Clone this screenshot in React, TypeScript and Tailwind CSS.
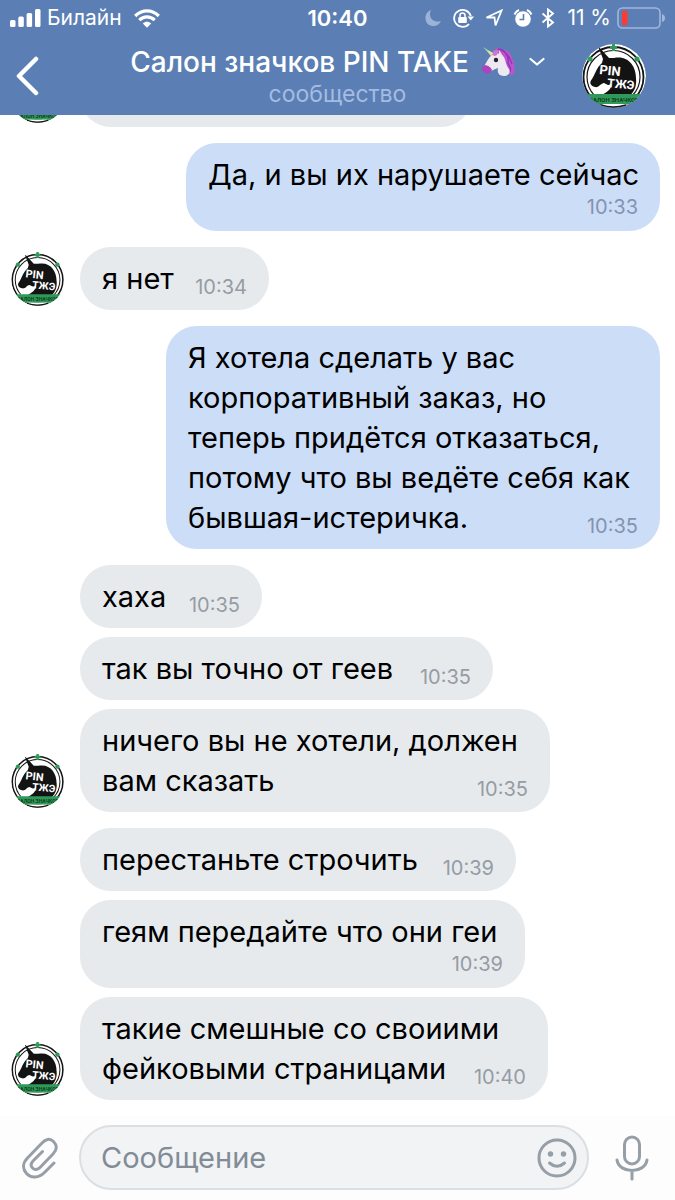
import { useState } from 'react';
import clsx from 'clsx';

interface Message {
  id: number;
  lines: string[];
  time: string;
  width: string;
  stacked?: boolean;
}

interface MessageGroup {
  id: number;
  own?: boolean;
  avatar?: boolean;
  messages: Message[];
}

const groups: MessageGroup[] = [
  {
    id: 1,
    avatar: true,
    messages: [{ id: 1, lines: [], time: '', width: 'w-[392px]' }],
  },
  {
    id: 2,
    own: true,
    messages: [{ id: 2, lines: ['Да, и вы их нарушаете сейчас'], time: '10:33', width: 'w-[474px]', stacked: true }],
  },
  {
    id: 3,
    avatar: true,
    messages: [{ id: 3, lines: ['я нет'], time: '10:34', width: 'w-[189px]' }],
  },
  {
    id: 4,
    own: true,
    messages: [
      {
        id: 4,
        lines: [
          'Я хотела сделать у вас',
          'корпоративный заказ, но',
          'теперь придётся отказаться,',
          'потому что вы ведёте себя как',
          'бывшая-истеричка.',
        ],
        time: '10:35',
        width: 'w-[494px]',
      },
    ],
  },
  {
    id: 5,
    avatar: true,
    messages: [
      { id: 5, lines: ['хаха'], time: '10:35', width: 'w-[182px]' },
      { id: 6, lines: ['так вы точно от геев'], time: '10:35', width: 'w-[413px]' },
      { id: 7, lines: ['ничего вы не хотели, должен', 'вам сказать'], time: '10:35', width: 'w-[470px]' },
    ],
  },
  {
    id: 6,
    avatar: true,
    messages: [
      { id: 8, lines: ['перестаньте строчить'], time: '10:39', width: 'w-[436px]' },
      { id: 9, lines: ['геям передайте что они геи'], time: '10:39', width: 'w-[445px]', stacked: true },
      { id: 10, lines: ['такие смешные со своиими', 'фейковыми страницами'], time: '10:40', width: 'w-[468px]' },
    ],
  },
];

function Avatar({ className }: { className: string }) {
  return (
    <svg viewBox="0 0 64 64" className={clsx('shrink-0 rounded-full', className)} role="img" aria-label="PIN TAKE">
      <circle cx="32" cy="32" r="32" fill="#fff" />
      <circle cx="31.5" cy="33" r="30" fill="none" stroke="#151515" strokeWidth="1.8" />
      <circle cx="31.5" cy="33" r="26.5" fill="none" stroke="#151515" strokeWidth="1.2" />
      <path
        d="M16 2 L27 14 L32 14 C46 11 54 22 54 34 C55 42 52 49 47 52 L18 52 C18 47 24 46 28 42 L22 39 C19 39 17 44 13 43 C8 42 7 38 10 35 C13 31 14 24 20 19 L21 15 Z"
        fill="#131313"
      />
      <path d="M11 51 C16 41 23 43 29 40 C30 45 25 48 20 51 Z" fill="#fff" />
      <g fill="#fff" fontFamily="Roboto, sans-serif" fontWeight="700">
        <text x="17" y="30" fontSize="13" transform="rotate(6 17 30)">PIN</text>
        <text x="25" y="43" fontSize="12" transform="rotate(5 25 43)">ТЖЭ</text>
      </g>
      <g fill="#2f9a58">
        <path d="M30 0h3v2h2v3h-2v2h-3v-2h-2v-3h2z" />
        <circle cx="8" cy="15" r="2.6" />
        <circle cx="55" cy="15" r="2.6" />
        <path d="M4 50 H60 L54 60 H10 Z" />
      </g>
      <path d="M18 60 H46 Q32 67 18 60" fill="#fff" />
      <path d="M19 61 Q31 65 44 61" fill="none" stroke="#151515" strokeWidth="1.5" />
      <text x="32" y="58" textAnchor="middle" fontSize="6" fontWeight="700" fontFamily="Roboto, sans-serif" fill="#123d22">
        САЛОН ЗНАЧКОВ
      </text>
    </svg>
  );
}

function Unicorn() {
  return (
    <svg viewBox="0 0 36 32" className="h-8 w-9 shrink-0" role="img" aria-label="Единорог">
      <path d="M13 7 C15 1 19 1 21 4 C27 3 31 8 31 13 C35 17 32 21 34 25 C34 29 30 30 27 27 C25 22 23 19 21 16 L12 9Z" fill="#bb55cf" />
      <path d="M17 3 C24 4 28 10 27 16 C27 20 31 21 29 26 M22 5 C29 9 29 14 31 18" fill="none" stroke="#8f34b5" strokeWidth="1.3" />
      <path d="M11 9 C14 6 19 7 22 10 C25 13 24 18 28 23 C30 27 27 30 23 30 C18 30 16 27 17 22 C13 23 11 25 8 26 C4 27 2 24 3 21 C5 17 7 12 11 9Z" fill="#eee8f0" />
      <path d="M2 20 C5 18 10 21 11 24 C9 28 5 29 3 26 C1 24 0 22 2 20Z" fill="#ae43bd" />
      <path d="M18 9 L18 4 L22 10Z" fill="#f4dce9" />
      <path d="M11 8 C12 4 15 3 18 5 C16 7 17 10 13 10Z" fill="#cf74cf" />
      <path d="M2 1 L12 7 L10 10Z" fill="#8fd8a4" />
      <path d="M6 4 L12 7 L10 10Z" fill="#f1dda0" />
      <circle cx="15" cy="14" r="2.2" fill="#28202a" />
    </svg>
  );
}

function StatusBar() {
  return (
    <div className="grid h-9 grid-cols-[1fr_auto_1fr] items-center px-[10px] text-[21px] leading-6">
      <div className="flex items-center">
        <svg viewBox="0 0 31 18" className="h-[18px] w-[31px]" fill="currentColor" aria-hidden="true">
          <rect x="0" y="11" width="5.5" height="7" rx="1.5" />
          <rect x="8.3" y="7.5" width="5.5" height="10.5" rx="1.5" />
          <rect x="16.6" y="4" width="5.5" height="14" rx="1.5" />
          <rect x="25" y="0" width="5.5" height="18" rx="1.5" />
        </svg>
        <span className="ml-[6px]">Билайн</span>
        <svg viewBox="0 0 26 19" className="ml-3 h-[19px] w-[26px]" fill="none" stroke="currentColor" strokeWidth="3.2" aria-hidden="true">
          <path d="M1.2 7 C8 .2 18 .2 24.8 7" />
          <path d="M5.3 11.2 C9.8 6.8 16.2 6.8 20.7 11.2" />
          <path d="M13 18.8 L8.8 14.6 C11.2 12.2 14.8 12.2 17.2 14.6Z" fill="currentColor" stroke="none" />
        </svg>
      </div>
      <span className="text-[22px] font-semibold">10:40</span>
      <div className="flex items-center justify-end">
        <svg viewBox="0 0 16 18" className="h-[18px] w-4" fill="#9db3d6" aria-hidden="true">
          <path d="M6 1 C-2 4-1 16 7 17 C11 17.5 14.5 15.5 16 12 C8 14.5 2.5 8 6 1Z" />
        </svg>
        <svg viewBox="0 0 22 20" className="ml-3 h-5 w-[22px]" fill="none" stroke="currentColor" aria-hidden="true">
          <path d="M16 16 A8.5 8.5 0 1 1 17.8 8" strokeWidth="1.8" />
          <path d="M14.5 8.5 H21 L17.8 12.5Z" fill="currentColor" stroke="none" />
          <rect x="5.2" y="9" width="8.6" height="6" rx="1" fill="currentColor" stroke="none" />
          <path d="M7 9.5 V7.5 A2.5 2.5 0 0 1 12 7.5 V9.5" strokeWidth="1.5" />
        </svg>
        <svg viewBox="0 0 18 18" className="ml-[10px] h-[18px] w-[18px]" fill="none" stroke="currentColor" strokeWidth="1.8" aria-hidden="true">
          <path d="M1.5 8.5 L16.5 1.5 L10.5 16.5 L9.5 8.5Z" />
        </svg>
        <svg viewBox="0 0 20 20" className="ml-[10px] h-5 w-5" aria-hidden="true">
          <circle cx="10" cy="11" r="7.8" fill="currentColor" />
          <path d="M1.5 6.5 A9 9 0 0 1 6 2 M14 2 A9 9 0 0 1 18.5 6.5" fill="none" stroke="currentColor" strokeWidth="2" />
          <path d="M10.5 6 V11.5 H6.5" fill="none" stroke="#5b7fb4" strokeWidth="1.6" />
        </svg>
        <svg viewBox="0 0 14 20" className="ml-2 h-5 w-[14px]" fill="none" stroke="currentColor" strokeWidth="1.9" aria-hidden="true">
          <path d="M1.5 5.5 L12 14.5 L7 18.5 V1.5 L12 5.5 L1.5 14.5" />
        </svg>
        <span className="ml-3 whitespace-nowrap">11 %</span>
        <svg viewBox="0 0 48 22" className="ml-[6px] h-[22px] w-12" aria-hidden="true">
          <rect x="1" y="1" width="42" height="20" rx="4.5" fill="none" stroke="#a2b7d9" strokeWidth="1.6" />
          <rect x="5" y="4" width="5.5" height="14" rx="1" fill="#ff3b30" />
          <path d="M45 7 Q48 8 48 11 T45 15Z" fill="#a2b7d9" />
        </svg>
      </div>
    </div>
  );
}

function Header() {
  return (
    <header className="shrink-0 bg-[#5b7fb4] text-white">
      <StatusBar />
      <div className="grid h-[79px] grid-cols-[1fr_auto_1fr] items-center px-4">
        <button type="button" aria-label="Назад" className="w-6">
          <svg viewBox="0 0 24 40" className="h-10 w-6" fill="none" stroke="currentColor" strokeWidth="4.5" strokeLinecap="round" strokeLinejoin="round">
            <path d="M20 3 L3 20 L20 37" />
          </svg>
        </button>
        <div className="text-center">
          <button type="button" className="flex h-9 items-center whitespace-nowrap">
            <h1 className="text-[28px] leading-9 font-medium">Салон значков PIN TAKE</h1>
            <span className="ml-3">
              <Unicorn />
            </span>
            <svg viewBox="0 0 16 10" className="ml-3 h-[10px] w-4" fill="none" stroke="currentColor" strokeWidth="2.2" strokeLinecap="round" strokeLinejoin="round" aria-hidden="true">
              <path d="M1.5 2 L8 7.5 L14.5 2" />
            </svg>
          </button>
          <p className="text-[23px] leading-7 text-[#a5bce2]">сообщество</p>
        </div>
        <Avatar className="mr-[13px] h-16 w-16 justify-self-end" />
      </div>
    </header>
  );
}

function Bubble({ message, own }: { message: Message; own?: boolean }) {
  return (
    <div
      className={clsx(
        'flow-root min-h-[63px] max-w-full rounded-[31px] pt-3 pr-[22px] pb-[11px] pl-[22px]',
        own ? 'bg-[#ccddf8]' : 'bg-[#e6eaed]',
        message.width
      )}
    >
      {message.lines.map((line, index) => (
        <span
          key={line}
          className={clsx(
            'text-[29px] leading-10 whitespace-pre text-black',
            (message.stacked || index < message.lines.length - 1) && 'block'
          )}
        >
          {line}
        </span>
      ))}
      {message.time && (
        <time
          className={clsx(
            'float-right text-[20px]',
            own ? 'text-[#8294b0]' : 'text-[#959ca4]',
            message.stacked ? 'leading-[25px]' : 'mt-4 leading-6'
          )}
        >
          {message.time}
        </time>
      )}
    </div>
  );
}

function PaperclipIcon() {
  return (
    <svg viewBox="0 0 36 42" className="h-[42px] w-9" fill="none" stroke="currentColor" strokeWidth="3" strokeLinecap="round" strokeLinejoin="round">
      <path d="M32 26 L22.5 35.5 C17 41 9 41.5 4.5 36.5 C0 31.5 1 25.5 5.5 21 L20 6 C23.5 2 28 1 31.5 4.5 C35.5 8.5 35 13 31 17 L18 30.5 C15.5 33 12.5 33 10.5 31 C8.5 29 8.8 26.5 11 24 L20.5 14.5" />
    </svg>
  );
}

function SmileIcon() {
  return (
    <svg viewBox="0 0 40 40" className="h-10 w-10" fill="none" stroke="currentColor" strokeWidth="3" strokeLinecap="round">
      <circle cx="20" cy="20" r="18" />
      <circle cx="13.5" cy="16" r="2.7" fill="currentColor" stroke="none" />
      <circle cx="26.5" cy="16" r="2.7" fill="currentColor" stroke="none" />
      <path d="M12.5 25 Q20 31.5 27.5 25" />
    </svg>
  );
}

function MicIcon() {
  return (
    <svg viewBox="0 0 34 46" className="h-[46px] w-[34px]" fill="none" stroke="currentColor" strokeWidth="3" strokeLinecap="round">
      <rect x="9.5" y="2" width="15" height="27" rx="7.5" />
      <path d="M2 25 C4 39 30 39 32 25 M17 36 V44" />
    </svg>
  );
}

export default function App() {
  const [draft, setDraft] = useState('');

  return (
    <div className="flex h-screen flex-col bg-white font-['Inter','Noto_Sans',sans-serif]">
      <Header />

      <main className="flex min-h-0 flex-1 flex-col justify-end gap-4 overflow-hidden pr-[15px] pb-4 pl-[11px]">
        {groups.map((group) => (
          <section key={group.id} className={clsx('flex shrink-0 items-end gap-[15px]', group.own && 'justify-end')}>
            {group.avatar && <Avatar className="mb-1 h-[54px] w-[54px]" />}
            <div className="flex flex-col gap-[9px]">
              {group.messages.map((message) => (
                <Bubble key={message.id} message={message} own={group.own} />
              ))}
            </div>
          </section>
        ))}
      </main>

      {/* Message form */}
      <form
        className="flex shrink-0 items-center bg-[#fdfdfd] pt-[9px] pr-[26px] pb-[10px] pl-[22px] text-[#969ea7]"
        onSubmit={(e) => {
          e.preventDefault();
          setDraft('');
        }}
      >
        <button type="button" aria-label="Прикрепить">
          <PaperclipIcon />
        </button>
        <div className="ml-[21px] flex h-[65px] min-w-0 flex-1 items-center rounded-full border-2 border-[#dcdfe2] bg-[#f1f3f5] pr-[10px] pl-5">
          <input
            type="text"
            aria-label="Сообщение"
            placeholder="Сообщение"
            value={draft}
            onChange={(e) => setDraft(e.target.value)}
            className="min-w-0 flex-1 bg-transparent text-[29px] leading-10 text-black outline-none placeholder:text-[#828b96]"
          />
          <button type="button" aria-label="Смайлики">
            <SmileIcon />
          </button>
        </div>
        <button type="button" aria-label="Голосовое сообщение" className="ml-[26px]">
          <MicIcon />
        </button>
      </form>
    </div>
  );
}
